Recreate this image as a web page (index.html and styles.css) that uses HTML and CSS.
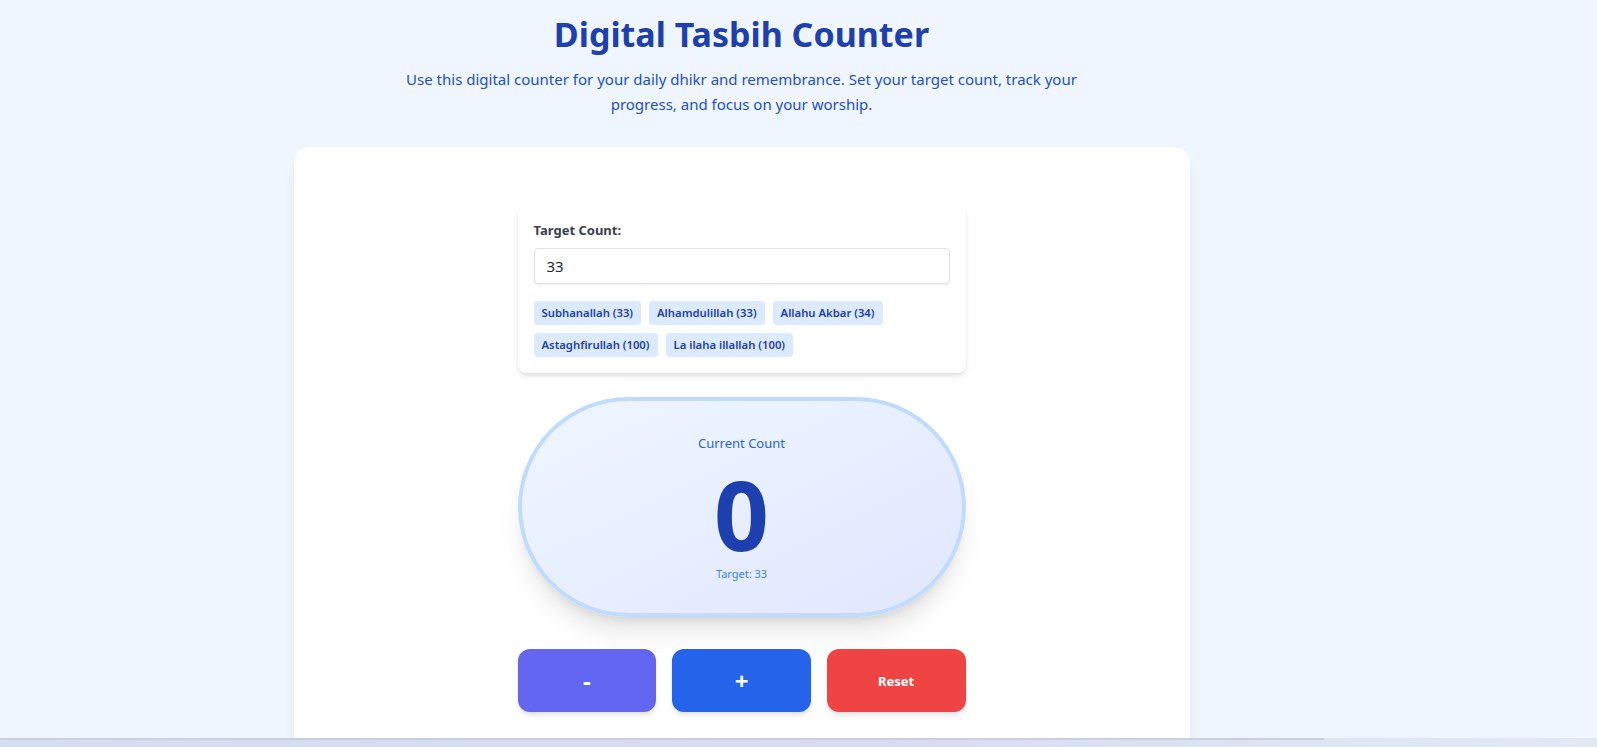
FILE: index.html
```html
<!DOCTYPE html>
<html lang="en">
<head>
<meta charset="utf-8">
<title>Digital Tasbih Counter</title>
<link rel="stylesheet" href="styles.css">
</head>
<body>
<div class="page">
  <header class="intro">
    <h1 class="title">Digital Tasbih Counter</h1>
    <p class="lead">Use this digital counter for your daily dhikr and remembrance. Set your target count, track your progress, and focus on your worship.</p>
  </header>
  <main class="panel">
    <div class="column">
      <section class="target-card">
        <label class="label" for="target">Target Count:</label>
        <input id="target" class="target-input" type="text" value="33">
        <div class="presets">
          <button class="chip">Subhanallah (33)</button>
          <button class="chip">Alhamdulillah (33)</button>
          <button class="chip">Allahu Akbar (34)</button>
          <button class="chip">Astaghfirullah (100)</button>
          <button class="chip">La ilaha illallah (100)</button>
        </div>
      </section>
      <div class="counter">
        <div class="counter-label">Current Count</div>
        <div class="counter-value">0</div>
        <div class="counter-target">Target: 33</div>
      </div>
      <div class="controls">
        <button class="btn btn-minus">-</button>
        <button class="btn btn-plus">+</button>
        <button class="btn btn-reset">Reset</button>
      </div>
    </div>
  </main>
</div>
<div class="taskbar"></div>
</body>
</html>
```
FILE: styles.css
```css
* { box-sizing: border-box; }

html, body {
  margin: 0;
  padding: 0;
  background: #eff6ff;
  font-family: "Noto Sans", "Open Sans", sans-serif;
  overflow: hidden;
}

.page {
  width: 1483px;
  padding-top: 14px;
}

.intro {
  text-align: center;
}

.title {
  margin: 0 0 13px;
  font-size: 34px;
  line-height: 40px;
  font-weight: 700;
  color: #1e40af;
}

.lead {
  max-width: 700px;
  margin: 0 auto 30px;
  font-size: 15px;
  line-height: 25px;
  color: #1d4ed8;
}

.panel {
  width: 896px;
  margin: 0 auto;
  background: #ffffff;
  border-radius: 16px;
  box-shadow: 0 10px 15px -3px rgba(0, 0, 0, 0.08), 0 4px 6px -4px rgba(0, 0, 0, 0.08);
  padding: 57px 32px 80px;
}

.column {
  width: 448px;
  margin: 0 auto;
  display: flex;
  flex-direction: column;
}

.target-card {
  background: #ffffff;
  border-radius: 8px;
  box-shadow: 0 4px 6px -1px rgba(0, 0, 0, 0.1), 0 2px 4px -2px rgba(0, 0, 0, 0.1);
  padding: 16px;
  display: flex;
  flex-direction: column;
}

.label {
  font-size: 13px;
  line-height: 20px;
  font-weight: 700;
  color: #374151;
  margin-bottom: 8px;
}

.target-input {
  height: 36px;
  border: 1px solid #dfe3e8;
  border-radius: 4px;
  padding: 0 12px;
  font-family: inherit;
  font-size: 15px;
  color: #1f2937;
  box-shadow: 0 1px 2px rgba(0, 0, 0, 0.08);
  outline: none;
}

.presets {
  margin-top: 17px;
  display: flex;
  flex-wrap: wrap;
  gap: 8px;
}

.chip {
  border: none;
  border-radius: 4px;
  background: #dbeafe;
  color: #1e40af;
  font-family: inherit;
  font-size: 11.3px;
  line-height: 16px;
  font-weight: 600;
  padding: 4px 8px;
  cursor: pointer;
}

.counter {
  margin-top: 24px;
  height: 220px;
  border: 4px solid #bfdbfe;
  border-radius: 9999px;
  background: linear-gradient(to bottom right, #eff6ff, #e0e7ff);
  box-shadow: 0 20px 25px -5px rgba(0, 0, 0, 0.1), 0 8px 10px -6px rgba(0, 0, 0, 0.1);
  padding-top: 32px;
  display: flex;
  flex-direction: column;
  align-items: center;
}

.counter-label {
  font-size: 13px;
  line-height: 20px;
  color: #2563eb;
}

.counter-value {
  margin-top: 13px;
  font-size: 96px;
  line-height: 96px;
  font-weight: 700;
  color: #1e40af;
}

.counter-target {
  margin-top: 4px;
  font-size: 11px;
  line-height: 16px;
  color: #3b82f6;
}

.controls {
  margin-top: 32px;
  display: grid;
  grid-template-columns: repeat(3, 1fr);
  gap: 16px;
}

.btn {
  height: 63px;
  border: none;
  border-radius: 12px;
  color: #ffffff;
  font-family: inherit;
  font-weight: 700;
  box-shadow: 0 4px 6px -1px rgba(0, 0, 0, 0.1), 0 2px 4px -2px rgba(0, 0, 0, 0.1);
  cursor: pointer;
}

.btn-minus { background: #6366f1; font-size: 24px; }
.btn-plus { background: #2563eb; font-size: 24px; }
.btn-reset { background: #ef4444; font-size: 13px; }

.taskbar {
  position: fixed;
  left: 0;
  right: 0;
  bottom: 0;
  height: 9px;
  background: linear-gradient(90deg, #d5def0 0%, #d8dcee 55%, #dde7f2 85%, #e0e9f2 100%);
}

.taskbar::before {
  content: "";
  display: block;
  width: 1324px;
  height: 2px;
  background: #c8cfe1;
}
```
